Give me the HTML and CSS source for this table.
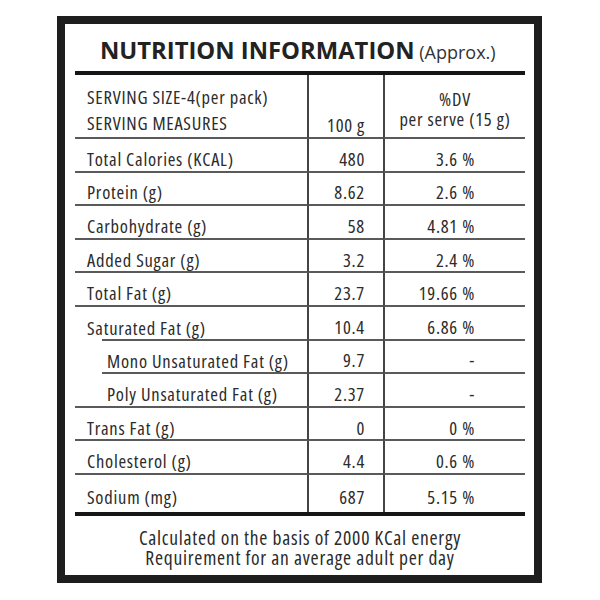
FILE: index.html
```html
<!DOCTYPE html>
<html>
<head>
<meta charset="utf-8">
<link rel="stylesheet" href="styles.css">
</head>
<body>
<div class="label">
  <h1 class="title"><span class="title-main">NUTRITION INFORMATION</span> <span class="title-sub">(Approx.)</span></h1>
  <div class="table">
    <div class="cell c1 head-c1"><div>SERVING SIZE-4(per pack)</div><div>SERVING MEASURES</div></div>
    <div class="cell c2 head-c2">100 g</div>
    <div class="cell c3 head-c3"><div>%DV</div><div>per serve (15 g)</div></div>

    <div class="cell c1 row">Total Calories (KCAL)</div><div class="cell c2 row">480</div><div class="cell c3 row">3.6 %</div>
    <div class="cell c1 row">Protein (g)</div><div class="cell c2 row">8.62</div><div class="cell c3 row">2.6 %</div>
    <div class="cell c1 row">Carbohydrate (g)</div><div class="cell c2 row">58</div><div class="cell c3 row">4.81 %</div>
    <div class="cell c1 row">Added Sugar (g)</div><div class="cell c2 row">3.2</div><div class="cell c3 row">2.4 %</div>
    <div class="cell c1 row">Total Fat (g)</div><div class="cell c2 row">23.7</div><div class="cell c3 row">19.66 %</div>
    <div class="cell c1 row indent-below">Saturated Fat (g)</div><div class="cell c2 row">10.4</div><div class="cell c3 row">6.86 %</div>
    <div class="cell c1 row sub indent-below">Mono Unsaturated Fat (g)</div><div class="cell c2 row">9.7</div><div class="cell c3 row">-</div>
    <div class="cell c1 row sub">Poly Unsaturated Fat (g)</div><div class="cell c2 row">2.37</div><div class="cell c3 row">-</div>
    <div class="cell c1 row">Trans Fat (g)</div><div class="cell c2 row">0</div><div class="cell c3 row">0 %</div>
    <div class="cell c1 row">Cholesterol (g)</div><div class="cell c2 row">4.4</div><div class="cell c3 row">0.6 %</div>
    <div class="cell c1 row last">Sodium (mg)</div><div class="cell c2 row last">687</div><div class="cell c3 row last">5.15 %</div>
  </div>
  <p class="footer">Calculated on the basis of 2000 KCal energy<br>Requirement for an average adult per day</p>
</div>
</body>
</html>
```

FILE: styles.css
```css
html, body {
  margin: 0;
  padding: 0;
  background: #fff;
}

body {
  font-family: "Open Sans", "DejaVu Sans Condensed", "Liberation Sans Narrow", sans-serif;
  font-stretch: 75%;
  letter-spacing: 0.75px;
  color: #2b2b2b;
}

.label {
  box-sizing: border-box;
  width: 485px;
  height: 567px;
  margin: 16px 0 0 57px;
  border: 8px solid #1e1e1e;
  padding: 0 9px 0 10px;
  display: flex;
  flex-direction: column;
}

.title {
  margin: 0;
  height: 51px;
  box-sizing: border-box;
  padding: 9px 0 0 25px;
  border-bottom: 4px solid #161616;
  white-space: nowrap;
  font-size: 18px;
  font-weight: 400;
  line-height: 34px;
  font-stretch: 100%;
  letter-spacing: 0;
}

.title-main {
  font-size: 23.8px;
  font-weight: 700;
  color: #222;
}

.title-sub {
  font-size: 18px;
  font-weight: 400;
  color: #333;
}

.table {
  display: grid;
  grid-template-columns: 232px 76px 142px;
  grid-template-rows: 64px repeat(10, 33.6px) 37px;
  border-bottom: 4px solid #161616;
}

.cell {
  box-sizing: border-box;
  border-bottom: 2px solid #5a5a5a;
  font-size: 18.5px;
  line-height: 20px;
  display: flex;
  align-items: center;
  white-space: nowrap;
}

.row {
  padding-top: 8px;
}

.c1 {
  padding-left: 12px;
}

.c2 {
  border-left: 2px solid #444;
  justify-content: flex-end;
  padding-right: 18px;
}

.c3 {
  border-left: 2px solid #444;
  justify-content: flex-end;
  padding-right: 50px;
}

.sub {
  padding-left: 32px;
}

.indent-below {
  border-bottom: none;
  background: linear-gradient(#5a5a5a, #5a5a5a) no-repeat right bottom / calc(100% - 27px) 2px;
}

.last {
  border-bottom: none;
}

.head-c1 {
  flex-direction: column;
  align-items: flex-start;
  justify-content: flex-start;
  padding-top: 9px;
  line-height: 26px;
}

.head-c2 {
  align-items: flex-end;
  padding-bottom: 2px;
}

.head-c3 {
  flex-direction: column;
  align-items: center;
  justify-content: flex-start;
  padding: 14px 0 0 0;
  line-height: 20px;
}

.footer {
  margin: 0;
  padding-top: 12px;
  text-align: center;
  font-size: 19.5px;
  line-height: 20px;
}
```
